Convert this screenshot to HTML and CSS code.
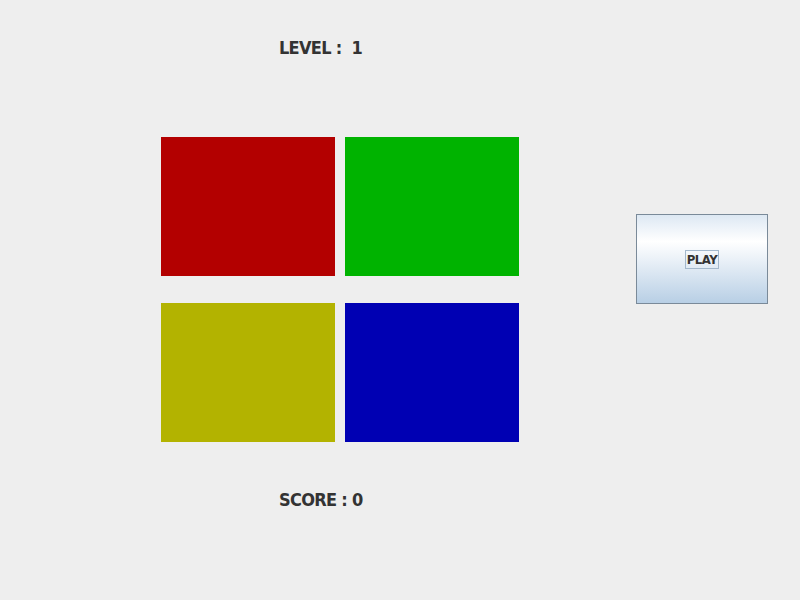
FILE: index.html
```html
<!DOCTYPE html>
<html>
<head>
<meta charset="utf-8">
<link rel="stylesheet" href="styles.css">
</head>
<body>
<div class="app">
  <div class="game">
    <div class="label level">LEVEL :&nbsp; 1</div>
    <div class="board">
      <div class="tile red"></div>
      <div class="tile green"></div>
      <div class="tile yellow"></div>
      <div class="tile blue"></div>
    </div>
    <div class="label score">SCORE : 0</div>
  </div>
  <div class="side">
    <button class="play"><span class="play-text">PLAY</span></button>
  </div>
</div>
</body>
</html>
```
FILE: styles.css
```css
html, body {
  margin: 0;
  padding: 0;
  background: #eeeeee;
}
.app {
  display: flex;
  width: 800px;
  height: 600px;
}
.game {
  margin-left: 161px;
  width: 358px;
  display: flex;
  flex-direction: column;
}
.label {
  font-family: "DejaVu Sans Condensed", "DejaVu Sans", sans-serif;
  font-weight: bold;
  font-size: 18px;
  line-height: 21px;
  color: #333333;
  letter-spacing: -0.7px;
  padding-left: 118px;
  white-space: pre;
}
.level {
  padding-top: 37px;
}
.board {
  margin-top: 79px;
  display: grid;
  grid-template-columns: 174px 174px;
  grid-template-rows: 139px 139px;
  column-gap: 10px;
  row-gap: 27px;
}
.red { background: #b30000; }
.green { background: #00b300; }
.yellow { background: #b3b300; }
.blue { background: #0000b3; }
.score {
  margin-top: 47px;
}
.side {
  margin-left: 117px;
  padding-top: 214px;
}
.play {
  width: 132px;
  height: 90px;
  margin: 0;
  padding: 0;
  border: 1px solid #7a8a99;
  background: linear-gradient(to bottom, #dde8f3 0%, #ffffff 30%, #e6eef6 55%, #b8cfe5 100%);
  display: flex;
  align-items: center;
  justify-content: center;
}
.play-text {
  font-family: "DejaVu Sans Condensed", "DejaVu Sans", sans-serif;
  font-weight: bold;
  font-size: 13px;
  line-height: 17px;
  color: #333333;
  border: 1px solid #a3b8cc;
  padding: 0 1px;
  letter-spacing: -0.4px;
}
```
